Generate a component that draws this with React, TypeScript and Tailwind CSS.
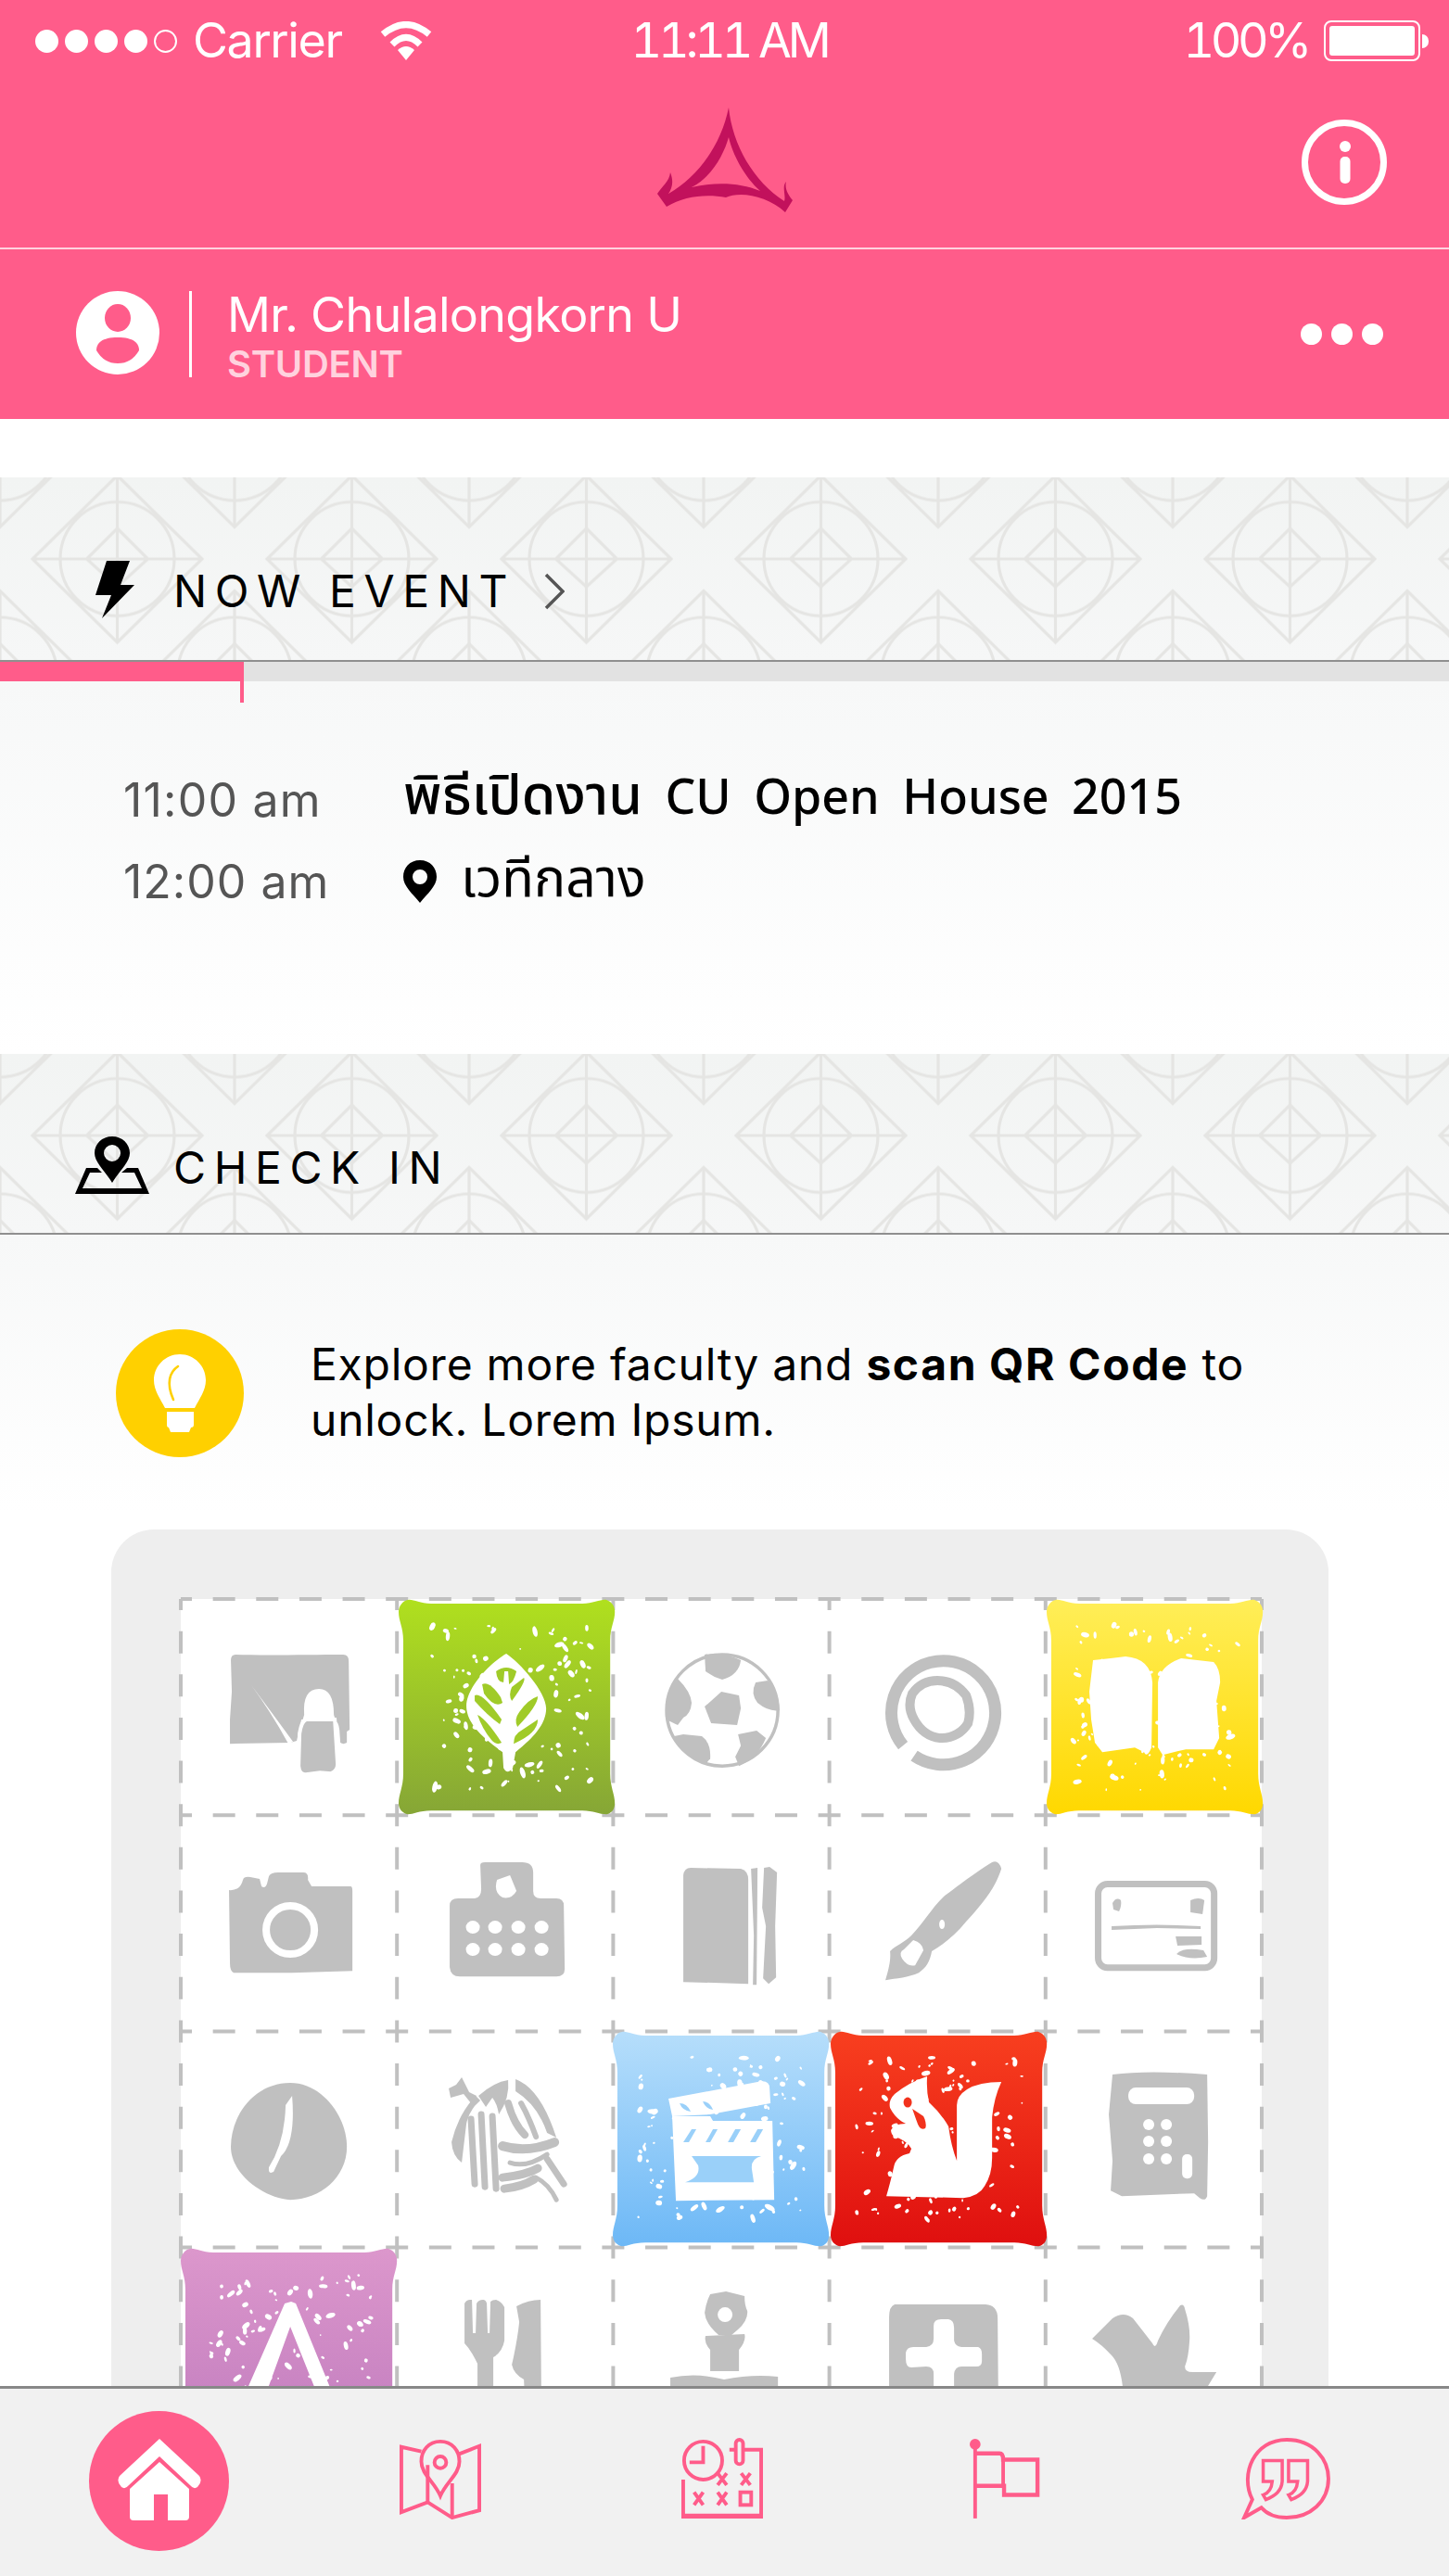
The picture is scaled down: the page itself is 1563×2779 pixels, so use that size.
import React from "react";

const G = "#c0c0c0";
const PINK = "#ff5c8a";

function rng(seed: number) {
  let s = seed;
  return () => {
    s = (s * 1664525 + 1013904223) % 4294967296;
    return s / 4294967296;
  };
}

function Speckles({ seed, n = 125 }: { seed: number; n?: number }) {
  const r = rng(seed);
  const items = [];
  for (let i = 0; i < n; i++) {
    const x = 26 + r() * 181;
    const y = 28 + r() * 178;
    const a = 0.8 + r() * 2;
    const b = a * (0.9 + r() * 1.4);
    const t = r() * 180;
    items.push(<ellipse key={i} cx={x} cy={y} rx={a} ry={b} transform={`rotate(${t} ${x} ${y})`} fill="#fff" />);
  }
  return <g>{items}</g>;
}

function Tile({ id, c1, c2, seed, children }: { id: string; c1: string; c2: string; seed: number; children: React.ReactNode }) {
  return (
    <svg viewBox="0 0 233 233" className="block w-full h-full overflow-visible">
      <defs>
        <linearGradient id={id} x1="0" y1="0" x2="0" y2="1">
          <stop offset="0" stopColor={c1} />
          <stop offset="1" stopColor={c2} />
        </linearGradient>
      </defs>
      <path
        fill={`url(#${id})`}
        d="M10 1C16 0 22 5 35 5L198 5C210 5 218 0 224 1C230 3 233 8 233 14C233 24 228 30 228 45L228 188C228 203 233 210 233 220C233 226 230 231 224 232C216 232 210 228 198 228L35 228C22 228 16 232 10 232C4 231 0 226 0 220C0 210 5 203 5 188L5 45C5 30 0 24 0 14C0 8 4 2 10 1Z"
      />
      <Speckles seed={seed} />
      {children}
    </svg>
  );
}

function Gray({ children }: { children: React.ReactNode }) {
  return (
    <svg viewBox="0 0 233 233" className="block w-full h-full" fill={G}>
      {children}
    </svg>
  );
}

const icons: React.ReactNode[] = [
  <Gray key="board">
    <path d="M59 60C90 61 140 60 175 60Q181 60 181 67L182 141L179 143L179 155Q175 157 172 155L171 141Q170 132 165 130L130 130L125 153L118 155L53 156L53 130L55 100L54 66Q54 60 59 60Z" />
    <path fill="#fff" d="M76 93Q100 125 121 154L116 156Q96 120 76 93Z" />
    <path fill="#fff" d="M133 125Q131 97 149 97Q165 97 165 125L168 135L130 135Z" />
    <path stroke="#fff" strokeWidth="4" d="M135 130Q130 132 128 145L127 180Q128 190 135 189L150 187L162 188Q169 185 169 178L166 130Z" />
  </Gray>,
  <Tile key="leaf" id="t1" c1="#b0e01e" c2="#86a636" seed={11}>
    <path fill="#fff" d="M116 59C130 68 159 100 159 118C159 135 145 150 126 165L123 182Q117 190 113 182L112 165C92 150 73 135 73 115C73 95 100 68 116 59Z" />
    <g fill="#a0cb28">
      <path d="M105 78Q116 70 127 78Q124 90 119 92L118 78L114 78L113 90Q106 90 105 78Z" />
      <path d="M90 92Q98 88 110 106L112 112Q103 118 92 102Z" />
      <path d="M82 104Q90 100 111 130L109 135Q95 125 82 110Z" />
      <path d="M85 125Q95 130 111 155Q105 158 100 152Q90 140 85 125Z" />
      <path d="M135 85Q138 88 122 110Q118 104 122 95Z" />
      <path d="M150 105Q150 115 128 138Q124 130 130 122Q140 108 150 105Z" />
      <path d="M150 130Q150 145 124 156Q124 146 132 142Z" />
    </g>
  </Tile>,
  <Gray key="ball">
    <circle cx="118" cy="120" r="60" fill="none" stroke={G} strokeWidth="3.5" />
    <path d="M99 60Q118 56 138 66Q136 82 118 87Q108 84 100 78Z" />
    <path d="M70 86Q84 100 85 112Q84 124 76 128L70 136Q62 132 57 130Q55 105 70 86Z" />
    <path d="M117 100L136 104L138 118L134 136L106 134L99 116Z" />
    <path d="M154 90L167 88Q178 100 180 120Q168 122 156 112Q148 102 154 90Z" />
    <path d="M66 148L76 146L96 148Q106 155 105 172L100 178Q78 172 66 148Z" />
    <path d="M135 146L155 142L165 150Q156 172 136 180L132 170L138 158Z" />
  </Gray>,
  <Gray key="target">
    <g transform="translate(-3 -2)">
      <path d="M82 160A56 56 0 1 1 94 171" fill="none" stroke={G} strokeWidth="13" />
      <path d="M119 90Q138 90 150 106Q156 122 152 136Q142 152 122 152Q104 150 94 132Q86 118 92 104Q102 90 119 90Z" fill="none" stroke={G} strokeWidth="10" />
    </g>
  </Gray>,
  <Tile key="book" id="t2" c1="#ffee58" c2="#ffd800" seed={23}>
    <path fill="#fff" d="M50 66Q70 64 85 62Q112 64 114 90L113 160Q108 172 105 165L95 160L60 165L52 155L48 130L46 100Z" />
    <path fill="#fff" d="M120 90Q122 72 145 64L180 68Q187 75 187 90L183 110L186 150L180 162L150 162L125 168L120 160Z" />
  </Tile>,

  <Gray key="camera">
    <path d="M52 81Q64 82 67 70Q68 66 75 67L85 69L87 77Q91 80 93 74L95 66Q97 62 105 62L132 62Q138 62 137 70L141 77L183 77Q185 77 185 82L185 168L120 170L57 170Q53 168 53 160Z" />
    <ellipse cx="118" cy="124" rx="26" ry="26" fill="none" stroke="#fff" strokeWidth="8" />
  </Gray>,
  <Gray key="building">
    <path d="M57 98Q57 90 66 90L84 90Q91 89 91 80L90 54Q90 51 95 51L135 51Q147 51 147 62L147 82Q147 90 155 90L172 90Q180 90 180 98L181 166Q181 174 172 174L68 174Q58 174 57 164Z" />
    <path fill="#fff" d="M108 70L122 65Q125 72 129 82Q124 91 114 89Q104 84 108 70Z" />
    {[82, 106, 131, 156].map((x) => (
      <g key={x} fill="#fff">
        <ellipse cx={x} cy="121" rx="7.5" ry="7" />
        <ellipse cx={x} cy="145" rx="7.5" ry="7" />
      </g>
    ))}
  </Gray>,
  <Gray key="closedbook">
    <path d="M84 57L138 58Q146 60 146 70L146 140L146 182L76 180L76 65Q77 57 84 57Z" />
    <path d="M149 58L156 57L155 183L151 183L152 130Z" />
    <path d="M163 57L169 56L177 62L175 120L176 175L168 182L162 176L165 120L161 100Z" />
  </Gray>,
  <Gray key="brush">
    <path d="M175 51Q182 48 185 58C178 80 165 95 147 115C135 130 122 140 110 147C108 158 104 165 96 170C85 175 72 176 60 178C64 165 66 155 65 147C72 140 80 138 88 130C100 118 110 100 124 87C140 75 160 60 175 51Z" />
    <path fill="#fff" d="M90 135Q100 138 101 146L92 162Q84 164 78 155Q74 148 80 145Z" />
    <ellipse cx="121" cy="118" rx="3" ry="5" fill="#fff" />
  </Gray>,
  <Gray key="card">
    <rect x="56.5" y="74.5" width="125" height="90" rx="10" fill="none" stroke={G} strokeWidth="7" />
    <path d="M72 95Q76 88 81 92Q82 98 79 104L73 102Z" />
    <path d="M156 92Q165 88 171 92L169 107L156 105Z" />
    <path d="M71 120Q120 117 167 120L167 123L120 122L71 124Z" />
    <path d="M140 131L168 131L168 140L142 141Z" />
    <path d="M141 150Q148 142 170 146L174 153Q155 157 141 150Z" />
  </Gray>,

  <Gray key="bean">
    <path d="M118 56C152 56 179 92 179 125C179 158 150 182 118 182C90 180 54 155 54 125C54 90 80 56 118 56Z" />
    <path fill="#fff" d="M120 70Q124 120 108 135L100 152Q94 155 95 147Q112 120 113 80Z" />
  </Gray>,
  <Gray key="yarn">
    <path d="M70 50L78 66L86 70L80 78L72 68L58 72L56 62L64 58Z" />
    <path d="M85 70Q66 90 59 120Q60 135 70 142L75 100Q78 85 90 75Z" />
    <path d="M88 70Q105 55 120 53Q122 72 110 90Q108 78 103 72L96 82Z" />
    <path d="M128 52Q155 62 172 115L162 110Q152 80 128 65Z" />
    <g fill="none" stroke={G} strokeLinecap="round">
      <path d="M80 95L84 165" strokeWidth="7" />
      <path d="M91 90L95 168" strokeWidth="7" />
      <path d="M103 92L107 170" strokeWidth="7" />
      <path d="M120 78Q126 100 138 112" strokeWidth="8" />
      <path d="M134 78Q142 92 150 114" strokeWidth="6" />
      <path d="M114 124Q140 132 170 120" strokeWidth="10" />
      <path d="M122 142Q140 148 162 133" strokeWidth="5" />
      <path d="M114 158Q140 155 152 148" strokeWidth="9" />
      <path d="M116 170Q135 168 148 160" strokeWidth="9" />
      <path d="M162 138L180 165" strokeWidth="7" />
      <path d="M150 158Q164 165 172 182" strokeWidth="5" />
    </g>
  </Gray>,
  <Tile key="clapper" id="t3" c1="#b6defb" c2="#6db8f6" seed={37}>
    <path fill="#fff" d="M60 73L156 55Q169 52 169 62L170 78L105 90L64 92Z" />
    <path fill="#fff" d="M64 92L105 92L108 97L172 97L174 182L68 183Z" />
    <g fill="#9ad0f9">
      <path d="M72 78Q80 78 84 87Q75 86 72 78Z" />
      <path d="M97 76Q104 76 108 85Q100 84 97 76Z" />
      <path d="M76 120L85 106L90 106L82 120Z" />
      <path d="M100 120L108 106L113 106L105 120Z" />
      <path d="M124 120L132 106L138 106L130 120Z" />
      <path d="M148 120L156 106L162 106L154 120Z" />
      <path d="M85 135L160 135Q148 138 150 150L152 163L78 163Q95 158 92 145Z" />
    </g>
  </Tile>,
  <Tile key="squirrel" id="t4" c1="#f83f1f" c2="#df0f0f" seed={51}>
    <path fill="#fff" d="M104 49Q85 55 69 68Q62 75 64 83Q70 95 81 100Q68 100 65 107Q65 112 69 114Q82 118 87 127L85 132Q70 135 68 147Q64 165 60 178L143 180Q160 178 166 167Q174 155 174 137L174 93Q176 72 184 55Q160 55 147 63Q136 70 136 80L136 140Q130 125 127 103Q120 90 106 77Q103 65 104 49Z" />
    <ellipse cx="83" cy="77" rx="4.5" ry="5.5" fill="#f2321c" />
    <path fill="#f2321c" d="M88 84L100 92Q104 100 102 105Q96 108 93 98Z" />
  </Tile>,
  <Gray key="calc">
    <path d="M72 47Q110 42 174 47L175 120L174 178Q172 184 166 180L160 175L82 178L70 172L72 140L68 90Z" />
    <rect x="89" y="61" width="71" height="18" rx="8" fill="#fff" />
    {[101, 119, 138].map((y) => (
      <g key={y} fill="#fff">
        <ellipse cx="111" cy={y} rx="6" ry="6" />
        <ellipse cx="130" cy={y} rx="6" ry="6" />
      </g>
    ))}
    <rect x="147" y="133" width="11" height="26" rx="5" fill="#fff" />
  </Gray>,

  <Tile key="logo" id="t5" c1="#dc97cc" c2="#bf7abd" seed={73}>
    <path fill="#fff" d="M119 58L124 60L177 190L160 190L118 85L80 190L55 190L112 60Z" />
  </Tile>,
  <Gray key="fork">
    <path d="M73 60Q75 56 79 56L81 56L82 92L85 92L86 60Q88 56 93 56Q96 56 97 60L98 92L100 92L101 58Q103 56 107 56Q113 58 116 64L116 100Q114 112 104 118L104 190L87 190L87 125Q80 110 73 103Z" />
    <path d="M129 63Q142 56 155 56L156 190L139 190L137 142Q126 136 124 126Q130 100 132 80Z" />
  </Gray>,
  <Gray key="stamp">
    <path d="M105 50L122 47L142 52Q142 62 145 68Q146 78 135 88L128 94L114 94Q100 82 99 70Q100 60 105 50Z" />
    <ellipse cx="121" cy="72" rx="8" ry="8" fill="#fff" />
    <path d="M100 95L142 93Q144 100 136 110L136 133L105 133L105 110Q98 102 100 95Z" />
    <path d="M62 140Q90 134 120 142Q150 136 178 139L178 200L62 200Z" />
  </Gray>,
  <Gray key="cross">
    <path d="M70 61L168 61Q181 62 181 76L182 200L64 200L64 75Q64 63 70 61Z" />
    <path fill="#fff" d="M112 84Q112 77 120 77L128 77Q134 78 134 86L134 100Q135 106 142 107L160 107Q164 108 164 115L164 122Q164 128 158 128L142 128Q135 128 134 136L134 200L112 200L112 136Q112 128 104 128L88 129Q82 129 82 120L82 113Q83 107 90 107L104 107Q112 106 112 98Z" />
  </Gray>,
  <Gray key="bird">
    <path d="M50 98L72 76Q84 68 94 76Q105 90 115 103Q118 110 121 100Q130 80 145 62Q149 60 150 66Q156 85 155 100Q154 118 150 128Q150 134 158 134L184 134L173 152L160 200L92 200L83 150Q80 125 71 116Q60 104 50 98Z" />
  </Gray>,
];

const cellShift: Record<number, string> = { 1: "translate-x-[2px]", 4: "translate-x-[1px]", 13: "translate-x-[1px]" };

function Pattern({ id }: { id: string }) {
  const d = (
    <g fill="none" stroke="#e5e5e3" strokeWidth="3.2">
      <path d="M0 -90L91.5 0L0 90L-91.5 0Z" />
      <circle r="61.5" />
      <path d="M0 -33L33 0L0 30L-33 0Z" />
      <path d="M0 -90V90M-91.5 0H91.5" />
    </g>
  );
  return (
    <svg className="absolute inset-0 w-full h-full" aria-hidden="true">
      <defs>
        <pattern id={id} width="253" height="249" patternUnits="userSpaceOnUse" patternTransform="translate(0 -36.5)">
          <g transform="translate(126.5 124.5)">{d}</g>
          <g transform="translate(0 0)">{d}</g>
          <g transform="translate(253 0)">{d}</g>
          <g transform="translate(0 249)">{d}</g>
          <g transform="translate(253 249)">{d}</g>
        </pattern>
      </defs>
      <rect width="100%" height="100%" fill={`url(#${id})`} />
    </svg>
  );
}

function Section({ id, children, h, pt }: { id: string; h: string; pt: string; children: React.ReactNode }) {
  return (
    <div className={`relative ${h} bg-linear-to-b from-[#f2f4f3] to-[#f6f7f7] border-b-2 border-[#8f8f8f] overflow-hidden`}>
      <Pattern id={id} />
      <div className={`relative h-full flex items-center ${pt}`}>{children}</div>
    </div>
  );
}

function GridLines() {
  const xs = [0, 1, 2, 3, 4, 5].map((i) => i * 233.2);
  const ys = [0, 1, 2, 3].map((i) => i * 233.2);
  const cfg = { stroke: G, strokeWidth: 4, strokeDasharray: "24 22.64", strokeDashoffset: 12 };
  return (
    <svg className="absolute left-0 top-0 w-[1166px] h-[933px] overflow-visible" aria-hidden="true">
      {xs.map((x) => (
        <line key={x} x1={x} x2={x} y1={0} y2={933} {...cfg} />
      ))}
      {ys.map((y) => (
        <line key={y} x1={0} x2={1166} y1={y} y2={y} {...cfg} />
      ))}
    </svg>
  );
}

const THAI = "[font-family:'Noto_Sans_Thai','Noto_Sans','DejaVu_Sans',sans-serif]";

export default function App() {
  return (
    <div className="w-[1563px] h-[2779px] overflow-hidden flex flex-col bg-white [font-family:Inter,'Noto_Sans',sans-serif] text-black">
      {/* Header */}
      <header className="bg-[#ff5c8a] text-white shrink-0">
        <div className="h-[88px] grid grid-cols-3 items-center pl-[38px] pr-[22px] font-normal text-[52px] tracking-[-1.4px]">
          <div className="flex items-center">
            <div className="flex gap-[7px]">
              {[0, 1, 2, 3].map((i) => (
                <span key={i} className="w-[25px] h-[25px] rounded-full bg-white" />
              ))}
              <span className="w-[25px] h-[25px] rounded-full border-2 border-white" />
            </div>
            <span className="ml-[17px]">Carrier</span>
            <svg viewBox="0 0 56 42" className="w-[56px] h-[42px] ml-[41px]" fill="none" stroke="#fff" strokeWidth="7">
              <path d="M3 14Q28 -7 53 14" />
              <path d="M13 25Q28 10 43 25" />
              <path d="M19 31L28 42L37 31Q28 23 19 31Z" fill="#fff" strokeWidth="0" />
            </svg>
          </div>
          <div className="text-center tabular-nums tracking-[-4.2px] ml-[-6px]">11:11 AM</div>
          <div className="flex items-center justify-end">
            <span className="tabular-nums tracking-[-4.4px]">100%</span>
            <div className="ml-[17px] w-[104px] h-[44px] rounded-[8px] border-2 border-white p-[4px]">
              <div className="w-full h-full bg-white rounded-[3px]" />
            </div>
            <div className="w-[7px] h-[15px] bg-white rounded-r-full ml-[2px]" />
          </div>
        </div>
        <div className="h-[179px] relative flex items-center justify-center">
          <svg viewBox="700 110 170 125" className="w-[170px] h-[125px] mt-[-8px] ml-[2px]">
            <path
              fill="#c2115c"
              fillRule="evenodd"
              d="M788 115C792 155 815 195 848 216C850 210 845 200 850 195C848 203 853 210 857 215L849 228C830 210 800 205 785 212C765 208 740 210 721 222L711 208C716 200 724 195 725 185C729 195 727 202 723 208C755 190 780 155 788 115ZM788 147C783 165 770 190 748 201C775 195 800 196 822 205C805 190 792 165 788 147Z"
            />
          </svg>
          <svg viewBox="0 0 92 92" className="absolute right-[67px] top-[41px] w-[92px] h-[92px]">
            <circle cx="46" cy="46" r="42.5" fill="none" stroke="#fff" strokeWidth="7" />
            <circle cx="47" cy="29" r="6" fill="#fff" />
            <rect x="41.5" y="40" width="11" height="29" rx="5" fill="#fff" />
          </svg>
        </div>
        <div className="h-[2px] bg-[#ffd3df]" />
        <div className="h-[183px] flex items-center pl-[82px] pr-[71px]">
          <svg viewBox="0 0 90 90" className="w-[90px] h-[90px] mt-[-3px]">
            <circle cx="45" cy="45" r="45" fill="#fff" />
            <ellipse cx="45" cy="29" rx="14" ry="15" fill={PINK} />
            <path fill={PINK} d="M45 50C62 50 68 56 68 64Q60 78 45 78Q30 78 22 64C22 56 28 50 45 50Z" />
          </svg>
          <div className="w-[3px] h-[93px] bg-white ml-[32px]" />
          <div className="ml-[38px] pt-[5px] flex flex-col">
            <span className="text-[52px] leading-[60px] font-normal tracking-[-0.7px]">Mr. Chulalongkorn U</span>
            <span className="text-[40px] leading-[46px] font-semibold text-[#ffd2de] tracking-[-0.3px]">STUDENT</span>
          </div>
          <div className="ml-auto flex gap-[10px]">
            <span className="w-[23px] h-[23px] rounded-full bg-white" />
            <span className="w-[23px] h-[23px] rounded-full bg-white" />
            <span className="w-[23px] h-[23px] rounded-full bg-white" />
          </div>
        </div>
      </header>

      <main className="flex-1 min-h-0 overflow-hidden">
        <div className="h-[63px]" />
        <Section id="p1" h="h-[199px]" pt="pt-[48px]">
          <svg viewBox="0 0 42 62" className="w-[42px] h-[62px] ml-[103px] mt-[-4px]">
            <path d="M12 0H37L27 26H42L7 62L17 37H0Z" />
          </svg>
          <span className="ml-[42px] text-[48px] tracking-[8.6px] font-normal">NOW EVENT</span>
          <svg viewBox="0 0 22 40" className="w-[22px] h-[40px] ml-[31px]" fill="none" stroke="#555" strokeWidth="3.5">
            <path d="M2 2L20 20L2 38" />
          </svg>
        </Section>
        <div className="relative h-[21px] bg-[#e2e2e2]">
          <div className="w-[263px] h-full bg-[#ff5c8a]" />
          <div className="absolute left-[259px] top-full w-[4px] h-[23px] bg-[#ff5c8a]" />
        </div>
        <div className="h-[402px] bg-linear-to-b from-[#f7f8f8] to-white pt-[84px] pl-[133px]">
          <div className="flex h-[88px] items-center">
            <span className="w-[302px] text-[50px] tracking-[1.2px] text-[#555]">11:00 am</span>
            <span className={`mb-[6px] text-[52px] font-medium ${THAI} [word-spacing:11px]`}>
              <span className="text-[59px]">พิธีเปิดงาน</span> CU Open House 2015
            </span>
          </div>
          <div className="flex h-[88px] items-center">
            <span className="w-[302px] text-[50px] tracking-[1px] text-[#555]">12:00 am</span>
            <svg viewBox="0 0 36 46" className="w-[36px] h-[46px]">
              <path fillRule="evenodd" d="M18 0C29 0 36 8 36 18C36 28 26 36 18 46C10 36 0 28 0 18C0 8 7 0 18 0ZM18 10A8 8 0 1 0 18 26A8 8 0 1 0 18 10Z" />
            </svg>
            <span className={`ml-[26px] text-[57px] ${THAI}`}>เวทีกลาง</span>
          </div>
        </div>
        <Section id="p2" h="h-[195px]" pt="pt-[52px]">
          <svg viewBox="0 0 80 62" className="w-[80px] h-[62px] ml-[81px] mt-[-6px]">
            <path fillRule="evenodd" d="M40 0C51 0 59 8 59 18C59 28 47 38 40 50C33 38 21 28 21 18C21 8 29 0 40 0ZM40 9A9 9 0 1 0 40 27A9 9 0 1 0 40 9Z" />
            <path d="M12 34H24L29 39H16L8 56H72L64 39H50L56 34H68L80 62H0Z" />
          </svg>
          <span className="ml-[26px] text-[48px] tracking-[8.6px]">CHECK IN</span>
        </Section>
        <div className="bg-linear-to-b from-[#f7f8f8] to-white to-[300px] pt-[102px]">
          <div className="flex items-center pl-[125px]">
            <svg viewBox="0 0 138 138" className="w-[138px] h-[138px] shrink-0">
              <circle cx="69" cy="69" r="69" fill="#ffd000" />
              <path fill="#fff" d="M69 27C85 27 97 40 97 55C97 66 90 75 85 85H53C48 75 41 66 41 55C41 40 53 27 69 27Z" />
              <path fill="#fff" d="M55 89H84V103Q84 106 81 106L79 111H59L57 106Q55 106 55 103Z" />
              <path fill="none" stroke="#ffd000" strokeWidth="2.6" strokeLinecap="round" d="M67 40C58 46 54 58 62 76" />
            </svg>
            <p className="ml-[72px] mt-[-3px] text-[48px] leading-[60px] tracking-[0.75px]">
              Explore more faculty and <b className="font-bold tracking-[1.6px]">scan QR Code</b> to
              <br />
              unlock. Lorem Ipsum.
            </p>
          </div>
          <div className="mt-[78px] ml-[120px] w-[1313px] h-[1100px] rounded-t-[46px] bg-[#eeeeee] pl-[75px] pt-[75px]">
            <div className="relative w-[1166px] bg-white">
              <GridLines />
              <div className="relative grid grid-cols-5">
                {icons.map((ic, i) => (
                  <div key={i} className={`h-[233.2px] ${cellShift[i] ?? ""}`}>
                    {ic}
                  </div>
                ))}
              </div>
            </div>
          </div>
        </div>
      </main>

      {/* Tab bar */}
      <nav className="relative h-[205px] shrink-0 bg-[#f1f1f1] border-t-[3px] border-[#888888]">
        <div className="h-full relative">
          <div className="absolute left-[96px] top-[24px] w-[151px] h-[151px] rounded-full bg-[#ff5c8a] flex items-center justify-center">
            <svg viewBox="0 0 90 88" className="w-[90px] h-[88px] mt-[-3px]">
              <path fill="#fff" d="M45 0L88 40Q92 46 86 52Q82 55 78 50L45 19L12 50Q8 55 4 52Q-2 46 2 40Z" />
              <path fill="#fff" fillRule="evenodd" d="M45 25L77 54V84Q77 88 73 88H54V60H39V88H17Q13 88 13 84V54Z" />
            </svg>
          </div>
          <div className="absolute left-[431px] top-[53px]">
            <svg viewBox="0 0 90 90" className="w-[88px] h-[88px]" fill="none" stroke={PINK} strokeWidth="4">
              <path d="M24 15L2 10V82L31 71L58 88L88 80V9L65 18" />
              <path d="M31 71V30M58 88V50" />
              <path d="M45 4C58 4 66 14 66 26C66 40 52 48 45 64C38 48 24 40 24 26C24 14 32 4 45 4Z" />
              <circle cx="45" cy="27" r="6.5" />
            </svg>
          </div>
          <div className="absolute left-[735px] top-[53px]">
            <svg viewBox="0 0 90 90" className="w-[88px] h-[88px]" fill="none" stroke={PINK} strokeWidth="4">
              <circle cx="24" cy="25" r="21" />
              <path d="M24 9V27H9" />
              <path d="M53 13H88V87H2V46" />
              <rect x="60" y="2" width="8" height="27" rx="4" fill="#f1f1f1" />
              <path d="M40 39L50 52M50 39L40 52M66 39L76 52M76 39L66 52M14 60L24 74M24 60L14 74M40 60L50 74M50 60L40 74" />
              <rect x="65" y="60" width="12" height="14" strokeWidth="4" />
              <path d="M2 86H88" strokeWidth="5" />
            </svg>
          </div>
          <div className="absolute left-[1046px] top-[53px]">
            <svg viewBox="0 0 80 90" className="w-[78px] h-[88px]" fill="none" stroke={PINK} strokeWidth="4">
              <circle cx="6" cy="7" r="4" fill={PINK} />
              <path d="M6 10V89" />
              <path d="M6 17H33Q37 17 37 24H75V63H38V53H6" strokeWidth="4.5" />
              <path d="M37 24V53" />
            </svg>
          </div>
          <div className="absolute left-[1339px] top-[53px]">
            <svg viewBox="0 0 98 90" className="w-[96px] h-[88px]" fill="none" stroke={PINK} strokeWidth="4">
              <path d="M12 68C-2 40 14 2 50 2C80 2 96 24 96 45C96 70 76 88 50 88C38 88 28 84 22 77L3 88Z" />
              <path strokeWidth="3.6" d="M24 25H45V48Q44 62 27 68L24 63Q33 60 34 48H24ZM52 25H73V48Q72 62 55 68L52 63Q61 60 62 48H52Z" />
            </svg>
          </div>
        </div>
      </nav>
    </div>
  );
}
